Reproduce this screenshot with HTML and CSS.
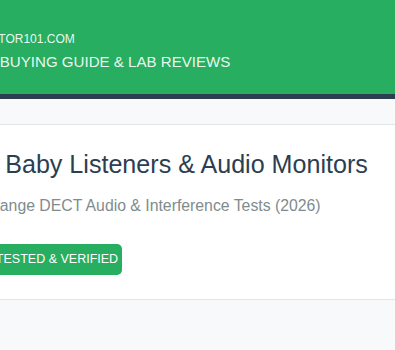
FILE: index.html
```html
<!DOCTYPE html>
<html lang="en">
<head>
    <meta charset="UTF-8">
    <title>Baby Listeners &amp; Audio Monitors</title>
    <link rel="stylesheet" href="styles.css">
</head>
<body>
    <header class="site-header">
        <div class="header-inner">
            <div class="logo">MONITOR101.COM</div>
            <div class="tagline">2026 BUYING GUIDE &amp; LAB REVIEWS</div>
        </div>
    </header>

    <section class="hero-card">
        <div class="hero-inner">
            <h1>Best Baby Listeners &amp; Audio Monitors</h1>
            <p class="subtitle">Long-Range DECT Audio &amp; Interference Tests (2026)</p>
            <span class="badge">LAB TESTED &amp; VERIFIED</span>
        </div>
    </section>
</body>
</html>
```

FILE: styles.css
```css
html {
    font-size: 16px;
}

body {
    font-family: "Liberation Sans", Arial, sans-serif;
    margin: 0;
    background-color: #f8f9fa;
    color: #2c3e50;
    overflow: hidden;
}

/* Header */
.site-header {
    background-color: #27ae60;
    border-bottom: 5px solid #2c3e50;
    padding: 32px 0 24px;
    color: rgba(255, 255, 255, 0.92);
}

.header-inner {
    margin-left: -38px;
}

.logo {
    font-size: 12px;
    margin-left: 5px;
}

.tagline {
    font-size: 15.1px;
    margin-top: 7px;
}

/* Hero card */
.hero-card {
    background: #fff;
    margin-top: 25px;
    border-top: 1px solid #e3e6e9;
    border-bottom: 1px solid #e3e6e9;
    padding: 25px 0 24px;
}

.hero-inner {
    margin-left: -52px;
}

.hero-card h1 {
    font-size: 25.1px;
    font-weight: normal;
    margin: 0 0 18px;
    color: #2c3e50;
    white-space: nowrap;
}

.subtitle {
    font-size: 15.8px;
    color: #7f8c8d;
    margin: 0 0 29px;
    white-space: nowrap;
}

.badge {
    display: inline-block;
    background-color: #27ae60;
    color: #fff;
    font-size: 12.5px;
    line-height: 15px;
    padding: 8px 4px 8px 21px;
    border-radius: 5px;
}
```
